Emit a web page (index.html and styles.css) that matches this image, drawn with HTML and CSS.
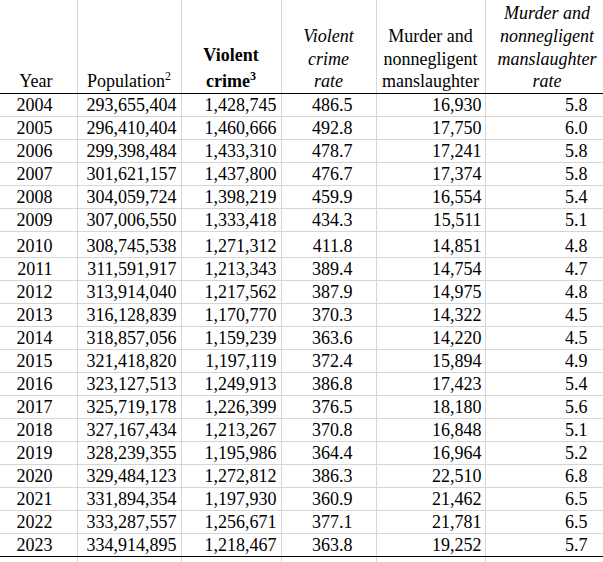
FILE: index.html
```html
<!DOCTYPE html>
<html>
<head>
<meta charset="utf-8">
<link rel="stylesheet" href="styles.css">
</head>
<body>
<table class="sheet">
<colgroup>
<col class="c-year"><col class="c-pop"><col class="c-vc"><col class="c-rate"><col class="c-mur"><col class="c-mrate">
</colgroup>
<thead>
<tr class="head">
<th class="h-year">Year</th>
<th class="h-pop">Population<sup>2</sup></th>
<th class="h-vc"><span class="l1">Violent</span>crime<sup>3</sup></th>
<th class="h-rate">Violent<br>crime<br>rate</th>
<th class="h-mur">Murder and<br>nonnegligent<br>manslaughter</th>
<th class="h-mrate">Murder and<br>nonnegligent<br>manslaughter<br>rate</th>
</tr>
</thead>
<tbody>
<tr><td>2004</td><td>293,655,404</td><td>1,428,745</td><td>486.5</td><td>16,930</td><td>5.8</td></tr>
<tr><td>2005</td><td>296,410,404</td><td>1,460,666</td><td>492.8</td><td>17,750</td><td>6.0</td></tr>
<tr><td>2006</td><td>299,398,484</td><td>1,433,310</td><td>478.7</td><td>17,241</td><td>5.8</td></tr>
<tr><td>2007</td><td>301,621,157</td><td>1,437,800</td><td>476.7</td><td>17,374</td><td>5.8</td></tr>
<tr><td>2008</td><td>304,059,724</td><td>1,398,219</td><td>459.9</td><td>16,554</td><td>5.4</td></tr>
<tr><td>2009</td><td>307,006,550</td><td>1,333,418</td><td>434.3</td><td>15,511</td><td>5.1</td></tr>
<tr class="tall"><td>2010</td><td>308,745,538</td><td>1,271,312</td><td>411.8</td><td>14,851</td><td>4.8</td></tr>
<tr><td>2011</td><td>311,591,917</td><td>1,213,343</td><td>389.4</td><td>14,754</td><td>4.7</td></tr>
<tr><td>2012</td><td>313,914,040</td><td>1,217,562</td><td>387.9</td><td>14,975</td><td>4.8</td></tr>
<tr><td>2013</td><td>316,128,839</td><td>1,170,770</td><td>370.3</td><td>14,322</td><td>4.5</td></tr>
<tr><td>2014</td><td>318,857,056</td><td>1,159,239</td><td>363.6</td><td>14,220</td><td>4.5</td></tr>
<tr><td>2015</td><td>321,418,820</td><td>1,197,119</td><td>372.4</td><td>15,894</td><td>4.9</td></tr>
<tr><td>2016</td><td>323,127,513</td><td>1,249,913</td><td>386.8</td><td>17,423</td><td>5.4</td></tr>
<tr><td>2017</td><td>325,719,178</td><td>1,226,399</td><td>376.5</td><td>18,180</td><td>5.6</td></tr>
<tr><td>2018</td><td>327,167,434</td><td>1,213,267</td><td>370.8</td><td>16,848</td><td>5.1</td></tr>
<tr><td>2019</td><td>328,239,355</td><td>1,195,986</td><td>364.4</td><td>16,964</td><td>5.2</td></tr>
<tr><td>2020</td><td>329,484,123</td><td>1,272,812</td><td>386.3</td><td>22,510</td><td>6.8</td></tr>
<tr><td>2021</td><td>331,894,354</td><td>1,197,930</td><td>360.9</td><td>21,462</td><td>6.5</td></tr>
<tr><td>2022</td><td>333,287,557</td><td>1,256,671</td><td>377.1</td><td>21,781</td><td>6.5</td></tr>
<tr class="last"><td>2023</td><td>334,914,895</td><td>1,218,467</td><td>363.8</td><td>19,252</td><td>5.7</td></tr>
<tr class="spare"><td></td><td></td><td></td><td></td><td></td><td></td></tr>
</tbody>
</table>
</body>
</html>
```
FILE: styles.css
```css
html, body {
  margin: 0;
  padding: 0;
  background: #fff;
  overflow: hidden;
}

.sheet {
  border-collapse: collapse;
  table-layout: fixed;
  width: 609px;
  font-family: "Liberation Serif", "Times New Roman", serif;
  font-size: 18px;
  color: #000;
}

.c-year { width: 77px; }
.c-pop { width: 104px; }
.c-vc { width: 100px; }
.c-rate { width: 95px; }
.c-mur { width: 109px; }
.c-mrate { width: 124px; }

.sheet td,
.sheet th {
  border: 1px solid #d6d6d6;
  padding: 0 4px;
  vertical-align: bottom;
  white-space: nowrap;
  font-weight: normal;
  text-align: right;
}

.sheet td:first-child,
.sheet th:first-child {
  border-left: none;
}

.sheet td {
  height: 22px;
  line-height: 22px;
}

.sheet tr.tall td {
  height: 25px;
}

.sheet tr.last td {
  border-bottom: 1px solid #000;
}

.sheet tr.spare td {
  height: 22px;
}

.sheet td:nth-child(1) { padding-right: 24px; }
.sheet td:nth-child(2) { padding-right: 4px; }
.sheet td:nth-child(3) { padding-right: 4px; }
.sheet td:nth-child(4) { padding-right: 23px; }
.sheet td:nth-child(5) { padding-right: 3px; }
.sheet td:nth-child(6) { padding-right: 21px; }

.head th {
  height: 93px;
  border-top: none;
  border-bottom: 1px solid #000;
  line-height: 22.7px;
  text-align: center;
  padding: 0 2px;
}

.head th.h-year {
  text-align: right;
  padding-right: 24px;
}

.head th.h-vc {
  font-weight: bold;
}

.h-vc .l1 {
  display: block;
  padding-bottom: 4px;
}

.head th.h-rate,
.head th.h-mrate {
  font-style: italic;
}

.sheet sup {
  font-size: 12px;
  line-height: 0;
  vertical-align: 7px;
}
```
